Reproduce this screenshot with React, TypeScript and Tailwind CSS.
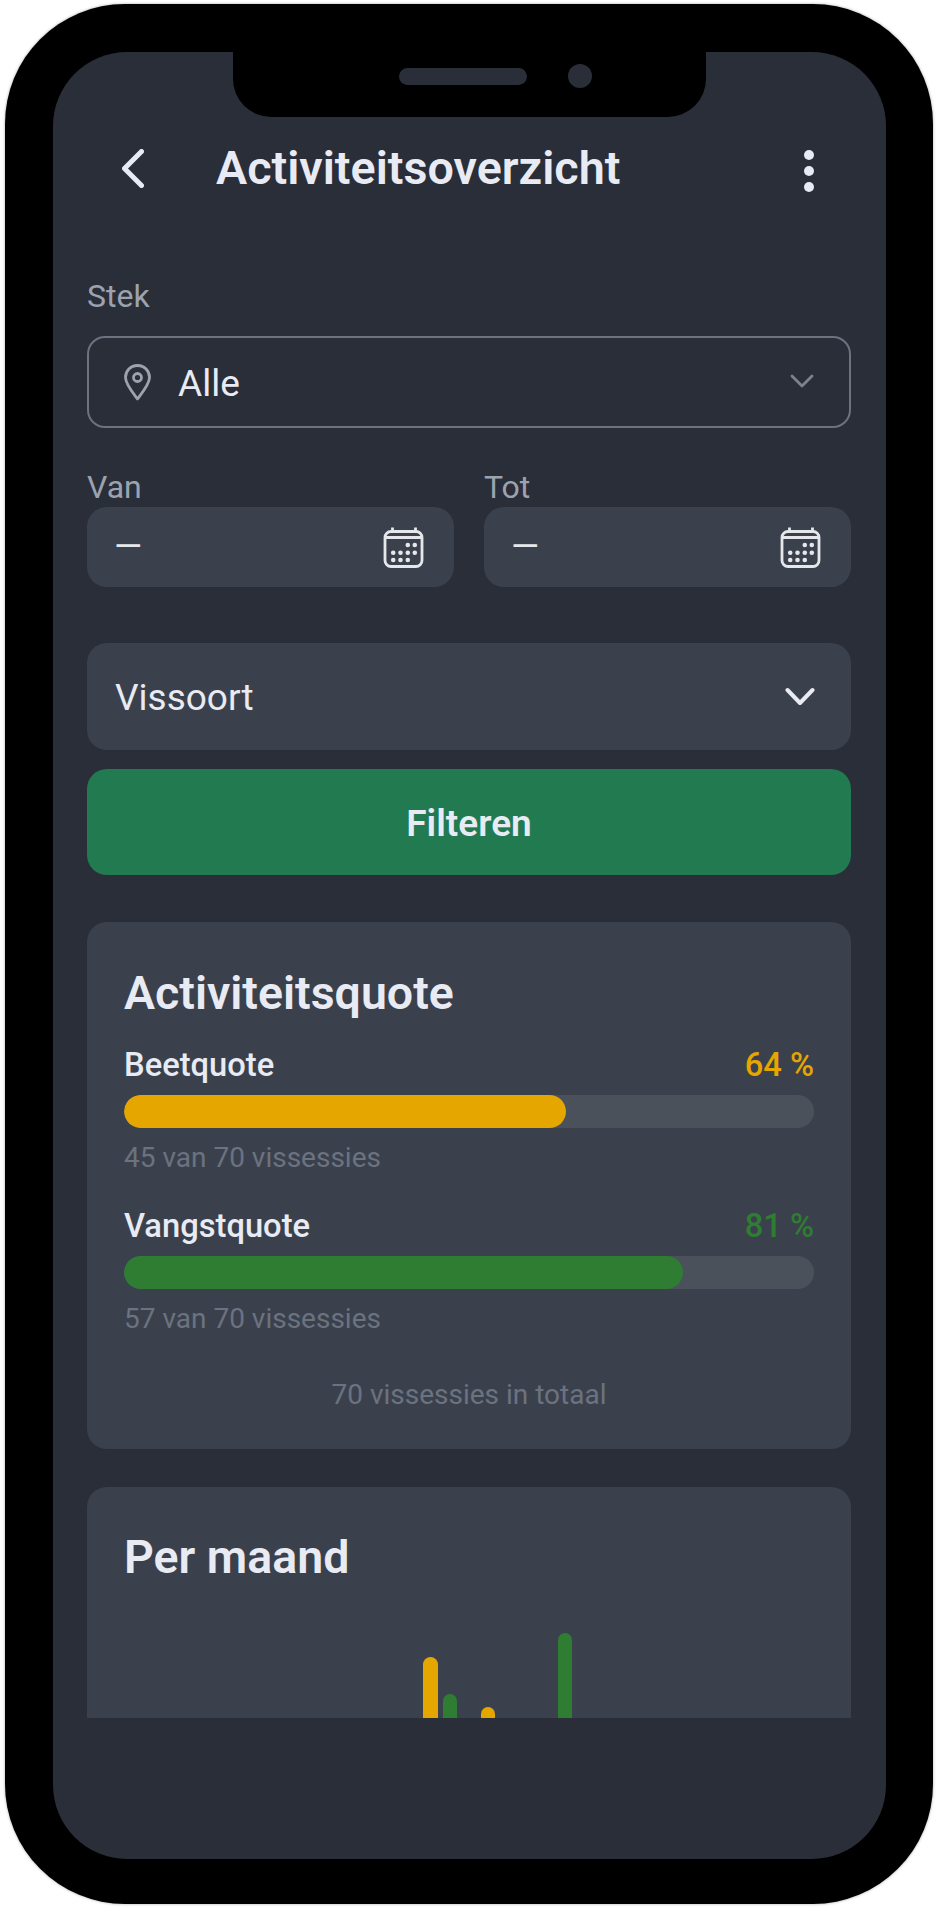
import React from 'react';

const months = [
    { bite: 0, catch: 0 }, { bite: 0, catch: 0 }, { bite: 0, catch: 0 }, { bite: 0, catch: 0 },
    { bite: 0, catch: 0 }, { bite: 173, catch: 136 }, { bite: 123, catch: 0 }, { bite: 0, catch: 197 },
    { bite: 0, catch: 0 }, { bite: 0, catch: 0 }, { bite: 0, catch: 0 }, { bite: 0, catch: 0 },
];

const CalendarIcon = () => (
    <svg width="41" height="41" viewBox="0 0 40 41" fill="none" stroke="#e5e7eb" strokeWidth="2.8">
        <rect x="1.5" y="4.5" width="37" height="35" rx="6" />
        <path d="M1.5 10.5H38.5M9 0.5V4.5M32 0.5V4.5" />
        <g fill="#e5e7eb" stroke="none">
            <circle cx="24.3" cy="18" r="2.3" /><circle cx="31.3" cy="18" r="2.3" />
            <circle cx="9.7" cy="25.7" r="2.3" /><circle cx="17" cy="25.7" r="2.3" /><circle cx="24.3" cy="25.7" r="2.3" /><circle cx="31.3" cy="25.7" r="2.3" />
            <circle cx="9.7" cy="33" r="2.3" /><circle cx="17" cy="33" r="2.3" /><circle cx="24.3" cy="33" r="2.3" />
        </g>
    </svg>
);

const DateField = ({ label }: { label: string }) => (
    <div className="flex-1">
        <div className="h-[40px] leading-[41px] text-[32px] text-[#9ca3af]">{label}</div>
        <div className="h-[80px] rounded-[20px] bg-[#3b414c] pl-[27px] pr-[30px] flex items-center justify-between">
            <span className="text-[36px] text-[#e5e7eb]">—</span>
            <CalendarIcon />
        </div>
    </div>
);

const Quote = ({ label, value, detail, percent, text, bar }: { label: string; value: string; detail: string; percent: number; text: string; bar: string }) => (
    <div>
        <div className="flex justify-between h-[40px] leading-[41px] text-[32.7px] font-medium">
            <span className="text-[#e8ebf3]">{label}</span>
            <span className={text}>{value}</span>
        </div>
        <div className="mt-[10px] h-[33px] rounded-full bg-[#4a515b] overflow-hidden">
            <div className={`h-full rounded-full ${bar}`} style={{ width: `${percent}%` }} />
        </div>
        <div className="mt-[12px] h-[36px] leading-[36px] text-[28px] text-[#6b7280]">{detail}</div>
    </div>
);

export default function App() {
    return (
        <div className="w-[938px] h-[1909px] bg-white pt-[4px] pl-[5px] font-['Roboto',sans-serif]">
            <div className="w-[928px] h-[1900px] rounded-[120px] bg-black pt-[48px] pl-[48px] shadow-[0_0_3px_#aaa]">
                <div className="relative w-[833px] h-[1807px] rounded-[74px] bg-[#2a2e39] overflow-hidden">
                    {/* notch */}
                    <div className="absolute top-0 left-[180px] w-[473px] h-[65px] rounded-b-[38px] bg-black">
                        <div className="absolute left-[166px] top-[16px] w-[128px] h-[17px] rounded-full bg-[#2a2e39]" />
                        <div className="absolute left-[335px] top-[12px] w-[24px] h-[24px] rounded-full bg-[#2a2e39]" />
                    </div>

                    <div className="h-[1666px] overflow-hidden pl-[34px] pr-[35px] pt-[86px]">
                        <header className="h-[60px] flex items-center">
                            <svg className="ml-[35px]" width="22" height="39" viewBox="0 0 22 39" fill="none" stroke="#e8ebf3" strokeWidth="5" strokeLinecap="round" strokeLinejoin="round">
                                <path d="M19.5 2.5L2.5 19.5L19.5 36.5" />
                            </svg>
                            <h1 className="ml-[72px] text-[46.7px] leading-[60px] font-semibold text-[#e8ebf3]">Activiteitsoverzicht</h1>
                            <svg className="ml-auto mr-[37px] mt-[5px]" width="10" height="44" viewBox="0 0 10 44" fill="#e8ebf3">
                                <circle cx="5" cy="6" r="5" /><circle cx="5" cy="22" r="5" /><circle cx="5" cy="38" r="5" />
                            </svg>
                        </header>

                        <div className="mt-[78px] h-[40px] leading-[41px] text-[32px] text-[#9ca3af]">Stek</div>
                        <div className="mt-[20px] h-[92px] rounded-[18px] border-2 border-[#6b7280] pl-[35px] pr-[35px] flex items-center">
                            <svg width="27" height="37" viewBox="0 0 27 37" fill="none" stroke="#9ca3af" strokeWidth="2.8" strokeLinejoin="round">
                                <path d="M13.5 1.5C6.5 1.5 1.5 7 1.5 13.5C1.5 20 9 29 13.5 35C18 29 25.5 20 25.5 13.5C25.5 7 20.5 1.5 13.5 1.5Z" />
                                <circle cx="13.5" cy="13.5" r="4" />
                            </svg>
                            <span className="ml-[27px] mt-[3px] text-[37px] text-[#e8ebf3]">Alle</span>
                            <svg className="ml-auto -mt-[2px]" width="24" height="14" viewBox="0 0 24 14" fill="none" stroke="#7d838e" strokeWidth="2.8" strokeLinecap="round" strokeLinejoin="round">
                                <path d="M2 2L12 12L22 2" />
                            </svg>
                        </div>

                        <div className="mt-[39px] flex gap-[30px]">
                            <DateField label="Van" />
                            <DateField label="Tot" />
                        </div>

                        <div className="mt-[56px] h-[107px] rounded-[20px] bg-[#3b414c] pl-[28px] pr-[36px] flex items-center justify-between">
                            <span className="mt-[2px] text-[37px] text-[#e8ebf3]">Vissoort</span>
                            <svg width="30" height="19" viewBox="0 0 30 19" fill="none" stroke="#e8ebf3" strokeWidth="4" strokeLinecap="round" strokeLinejoin="round">
                                <path d="M2.5 3L15 16L27.5 3" />
                            </svg>
                        </div>

                        <button className="mt-[19px] w-full h-[106px] rounded-[20px] bg-[#217a50] pt-[3px] text-[37px] font-semibold text-[#e8ebf3]">Filteren</button>

                        <section className="mt-[47px] h-[527px] rounded-[20px] bg-[#3b414c] px-[37px] pt-[43px]">
                            <h2 className="h-[56px] leading-[57px] text-[46.5px] font-semibold text-[#e8ebf3]">Activiteitsquote</h2>
                            <div className="mt-[24px]">
                                <Quote label="Beetquote" value="64 %" detail="45 van 70 vissessies" percent={64} text="text-[#e5a600]" bar="bg-[#e5a600]" />
                            </div>
                            <div className="mt-[30px]">
                                <Quote label="Vangstquote" value="81 %" detail="57 van 70 vissessies" percent={81} text="text-[#2e7d32]" bar="bg-[#2e7d32]" />
                            </div>
                            <div className="mt-[40px] h-[36px] leading-[36px] text-[28px] text-center text-[#6b7280]">70 vissessies in totaal</div>
                        </section>

                        <section className="mt-[38px] rounded-t-[20px] bg-[#3b414c] px-[37px] pt-[42px]">
                            <h2 className="h-[56px] leading-[57px] text-[46.5px] font-semibold text-[#e8ebf3]">Per maand</h2>
                            <div className="mt-[45px] h-[200px] grid grid-cols-12">
                                {months.map((m, i) => (
                                    <div key={i} className="flex items-end justify-center gap-[5px]">
                                        <div className="w-[14.5px] rounded-t-full bg-[#e5a600]" style={{ height: m.bite }} />
                                        <div className="w-[14.5px] rounded-t-full bg-[#2e7d32]" style={{ height: m.catch }} />
                                    </div>
                                ))}
                            </div>
                        </section>
                    </div>
                </div>
            </div>
        </div>
    );
}
